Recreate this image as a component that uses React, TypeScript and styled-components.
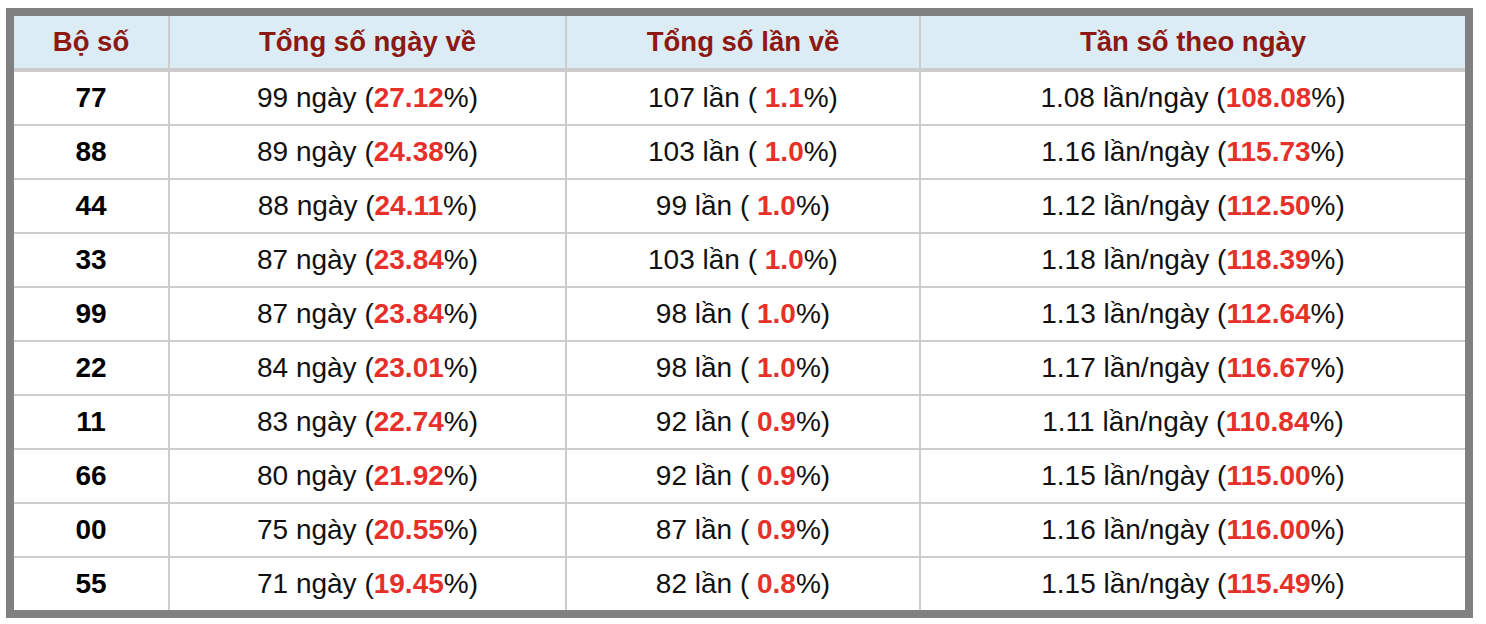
import React from "react";
import styled, { createGlobalStyle } from "styled-components";

const Global = createGlobalStyle`
  html, body { background: #ffffff; }
  body {
    margin: 8px 0 0 6px;
    font-family: "Liberation Sans", Arial, Helvetica, sans-serif;
  }
`;

const Table = styled.table`
  width: 1467px;
  border: 8px solid #808080;
  border-collapse: separate;
  border-spacing: 0;
  table-layout: fixed;
  font-family: "Liberation Sans", Arial, Helvetica, sans-serif;
  font-size: 28px;
  color: #111111;
`;

const HeadCell = styled.th`
  height: 52px;
  padding: 0;
  background: #dcecf5;
  color: #8c1812;
  font-weight: bold;
  font-size: 27.5px;
  text-align: center;
  vertical-align: middle;
  border-bottom: 4px solid #cccccc;
  border-right: 2px solid #cccccc;
  &:last-child { border-right: none; }
`;

const Cell = styled.td<{ $bold?: boolean; $last?: boolean }>`
  height: 52px;
  padding: 0;
  text-align: center;
  vertical-align: middle;
  font-weight: ${(p) => (p.$bold ? "bold" : "normal")};
  color: ${(p) => (p.$bold ? "#000000" : "#111111")};
  border-right: 2px solid #cccccc;
  border-bottom: ${(p) => (p.$last ? "none" : "2px solid #cccccc")};
  &:last-child { border-right: none; }
`;

const Red = styled.span`
  color: #e8302a;
  font-weight: bold;
`;

type Row = { bo: string; ngay: string; pNgay: string; lan: string; pLan: string; tan: string; pTan: string };

const rows: Row[] = [
  { bo: "77", ngay: "99", pNgay: "27.12", lan: "107", pLan: "1.1", tan: "1.08", pTan: "108.08" },
  { bo: "88", ngay: "89", pNgay: "24.38", lan: "103", pLan: "1.0", tan: "1.16", pTan: "115.73" },
  { bo: "44", ngay: "88", pNgay: "24.11", lan: "99", pLan: "1.0", tan: "1.12", pTan: "112.50" },
  { bo: "33", ngay: "87", pNgay: "23.84", lan: "103", pLan: "1.0", tan: "1.18", pTan: "118.39" },
  { bo: "99", ngay: "87", pNgay: "23.84", lan: "98", pLan: "1.0", tan: "1.13", pTan: "112.64" },
  { bo: "22", ngay: "84", pNgay: "23.01", lan: "98", pLan: "1.0", tan: "1.17", pTan: "116.67" },
  { bo: "11", ngay: "83", pNgay: "22.74", lan: "92", pLan: "0.9", tan: "1.11", pTan: "110.84" },
  { bo: "66", ngay: "80", pNgay: "21.92", lan: "92", pLan: "0.9", tan: "1.15", pTan: "115.00" },
  { bo: "00", ngay: "75", pNgay: "20.55", lan: "87", pLan: "0.9", tan: "1.16", pTan: "116.00" },
  { bo: "55", ngay: "71", pNgay: "19.45", lan: "82", pLan: "0.8", tan: "1.15", pTan: "115.49" },
];

export default function App() {
  return (
    <>
      <Global />
      <Table>
        <colgroup>
          <col style={{ width: 156 }} />
          <col style={{ width: 397 }} />
          <col style={{ width: 354 }} />
          <col style={{ width: 544 }} />
        </colgroup>
        <thead>
          <tr>
            <HeadCell>Bộ số</HeadCell>
            <HeadCell>Tổng số ngày về</HeadCell>
            <HeadCell>Tổng số lần về</HeadCell>
            <HeadCell>Tần số theo ngày</HeadCell>
          </tr>
        </thead>
        <tbody>
          {rows.map((r, i) => {
            const last = i === rows.length - 1;
            return (
              <tr key={r.bo}>
                <Cell $bold $last={last}>{r.bo}</Cell>
                <Cell $last={last}>
                  {r.ngay} ngày (<Red>{r.pNgay}</Red>%)
                </Cell>
                <Cell $last={last}>
                  {r.lan} lần ( <Red>{r.pLan}</Red>%)
                </Cell>
                <Cell $last={last}>
                  {r.tan} lần/ngày (<Red>{r.pTan}</Red>%)
                </Cell>
              </tr>
            );
          })}
        </tbody>
      </Table>
    </>
  );
}
